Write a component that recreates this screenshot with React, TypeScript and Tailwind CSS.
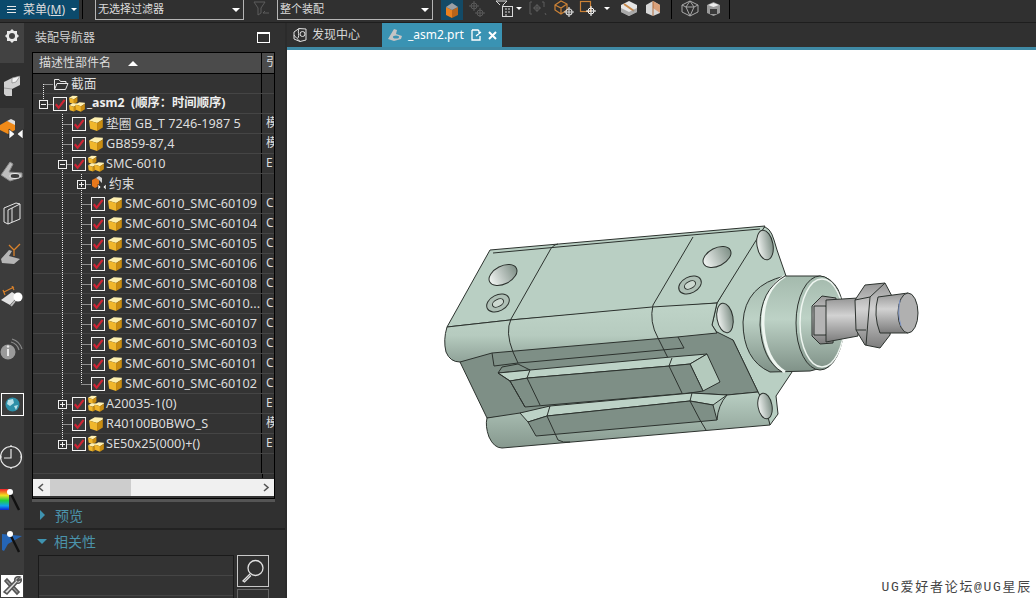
import React from "react";

type CellKind = "none" | "line" | "tee" | "last" | "first" | "minus" | "plus" | "minusLast" | "plusLast" | "plusTee" | "minusTee";

const Cell = ({ kind }: { kind: CellKind }) => {
  const box = kind.startsWith("minus") || kind.startsWith("plus");
  const up = kind !== "none" && kind !== "first";
  const down = kind === "line" || kind === "tee" || kind === "plusTee" || kind === "minusTee" || kind === "first" || kind === "plus" || kind === "minus";
  const right = kind !== "none" && kind !== "line";
  return (
    <svg width="19" height="20" className="shrink-0" fill="none">
      {up && <path d="M9.5 0V10" stroke="#e8e8e8" strokeDasharray="1 1" />}
      {down && <path d="M9.5 10V20" stroke="#e8e8e8" strokeDasharray="1 1" />}
      {right && <path d="M9.5 10.5H19" stroke="#e8e8e8" strokeDasharray="1 1" />}
      {box && (
        <>
          <rect x="5.5" y="6.5" width="8" height="8" fill="#333" stroke="#f0f0f0" />
          <path d="M7 10.5H12" stroke="#f0f0f0" />
          {kind.startsWith("plus") && <path d="M9.5 8V13" stroke="#f0f0f0" />}
        </>
      )}
    </svg>
  );
};

const Check = () => (
  <svg width="14" height="14" className="shrink-0" viewBox="0 0 14 14" fill="none">
    <rect x="0.5" y="0.5" width="13" height="13" fill="#3a3a3a" stroke="#f2f2f2" />
    <path d="M2.8 7.2L5.6 10.8L11.6 2.8" stroke="#cf2433" strokeWidth="2.2" />
  </svg>
);

const Cube = ({ x = 0, y = 0, s = 1 }: { x?: number; y?: number; s?: number }) => (
  <g transform={`translate(${x} ${y}) scale(${s})`}>
    <path d="M0 4L5 1L12 1.5V3L7 6Z" fill="#fff0b0" />
    <path d="M0 4L7 6V13L1 11Z" fill="#f0b62c" />
    <path d="M7 6L12 3V10L7 13Z" fill="#c98d12" />
  </g>
);

const PartIcon = () => (
  <svg width="16" height="16" className="shrink-0" viewBox="0 0 16 16">
    <Cube x={1} y={0} s={1.15} />
  </svg>
);

const AsmIcon = () => (
  <svg width="16" height="17" className="shrink-0" viewBox="0 0 16 17">
    <Cube x={0} y={0} s={0.7} />
    <Cube x={0} y={7.5} s={0.7} />
    <Cube x={6.5} y={6.5} s={0.78} />
  </svg>
);

const FolderIcon = () => (
  <svg width="16" height="14" className="shrink-0" viewBox="0 0 16 14" fill="none" stroke="#e8e8e8">
    <path d="M1.5 12.5V2.5H6L7.5 4.5H13V6.5" />
    <path d="M1.5 12.5L4 6.5H15L12.5 12.5Z" />
  </svg>
);

const ConstraintIcon = () => (
  <svg width="16" height="16" className="shrink-0" viewBox="0 0 16 16">
    <path d="M1 4L5 2L8 4V10L4 12L1 10Z" fill="#e8781c" />
    <path d="M5 2L8 0L11 2L11 7L8 4Z" fill="#cfcfcf" />
    <path d="M7 8L10 11L7 14Z M15 8L12 11L15 14Z" fill="#f4f4f4" stroke="#111" strokeWidth="0.5" />
  </svg>
);

type Row = { cells: CellKind[]; icon?: "part" | "asm" | "folder" | "con"; check?: boolean; name: string; ref?: string; bold?: boolean };

const sub = (name: string, last = false): Row => ({ cells: ["none", "line", last ? "last" : "tee"], check: true, icon: "part", name, ref: "C" });

const rows: Row[] = [
  { cells: ["first"], icon: "folder", name: "截面" },
  { cells: ["minusLast"], check: true, icon: "asm", name: "_asm2\u00a0 (顺序：时间顺序)", bold: true },
  { cells: ["none", "tee"], check: true, icon: "part", name: "垫圈 GB_T 7246-1987 5", ref: "模" },
  { cells: ["none", "tee"], check: true, icon: "part", name: "GB859-87,4", ref: "模" },
  { cells: ["none", "minusTee"], check: true, icon: "asm", name: "SMC-6010", ref: "E" },
  { cells: ["none", "line", "plus"], icon: "con", name: "约束" },
  sub("SMC-6010_SMC-60109"),
  sub("SMC-6010_SMC-60104"),
  sub("SMC-6010_SMC-60105"),
  sub("SMC-6010_SMC-60106"),
  sub("SMC-6010_SMC-60108"),
  sub("SMC-6010_SMC-6010..."),
  sub("SMC-6010_SMC-60107"),
  sub("SMC-6010_SMC-60103"),
  sub("SMC-6010_SMC-60101"),
  sub("SMC-6010_SMC-60102", true),
  { cells: ["none", "plusTee"], check: true, icon: "asm", name: "A20035-1(0)", ref: "E" },
  { cells: ["none", "tee"], check: true, icon: "part", name: "R40100B0BWO_S", ref: "模" },
  { cells: ["none", "plusLast"], check: true, icon: "asm", name: "SE50x25(000)+()", ref: "E" },
];

const TreeRow = ({ row }: { row: Row }) => (
  <div className="flex h-5 shrink-0 border-b border-[#454545] bg-[#333333]">
    <div className="flex w-[229px] shrink-0 items-center overflow-hidden border-r border-black pl-[1px]">
      {row.cells.map((c, i) => (
        <Cell key={i} kind={c} />
      ))}
      {row.check && (
        <div className="mr-[2px] shrink-0">
          <Check />
        </div>
      )}
      {row.icon === "part" && <PartIcon />}
      {row.icon === "asm" && <AsmIcon />}
      {row.icon === "folder" && <FolderIcon />}
      {row.icon === "con" && <ConstraintIcon />}
      <span className={`ml-[2px] whitespace-nowrap ${row.bold ? "text-[12.3px] font-bold text-[#eeeeee]" : "text-[12.7px] text-[#dddddd]"}`}>{row.name}</span>
    </div>
    <span className="ml-[4px] whitespace-nowrap text-[12px] text-[#dddddd]">{row.ref}</span>
  </div>
);

const railIcons: { h: number; node: React.ReactNode; cls?: string }[] = [
  {
    h: 40,
    cls: "bg-[#424242]",
    node: (
      <svg width="16" height="16" viewBox="0 0 16 16" className="-mt-[14px]">
        <path d="M8 1L10 3L13 3L13 6L15 8L13 10L13 13L10 13L8 15L6 13L3 13L3 10L1 8L3 6L3 3L6 3Z" fill="#e8e8e8" />
        <circle cx="8" cy="8" r="3" fill="#424242" />
      </svg>
    ),
  },
  {
    h: 45,
    cls: "bg-[#303030]",
    node: (
      <svg width="18" height="22" viewBox="0 0 18 22">
        <path d="M1 7L9 3L17 1V10L9 14V21L3 21L1 19Z" fill="#d0d0d0" />
        <path d="M9 3L17 1L13 7L9 8Z M1 13L9 14" fill="#f4f4f4" stroke="#777" strokeWidth="0.6" />
      </svg>
    ),
  },
  {
    h: 40,
    node: (
      <svg width="24" height="24" viewBox="0 0 24 24">
        <path d="M0 9L7 5L15 8V14L8 18L0 14Z" fill="#f08a18" />
        <path d="M7 5L11 3L15 5V9Z" fill="#e0e0e0" />
        <path d="M9 13L15 18L9 23Z M23 13L17 18L23 23Z" fill="#fafafa" stroke="#111" strokeWidth="0.6" />
      </svg>
    ),
  },
  {
    h: 46,
    node: (
      <svg width="24" height="24" viewBox="0 0 24 24" fill="none">
        <path d="M1 16L10 3L13 5L9 13L22 14L22 18L10 22Z" fill="#bdbdbd" stroke="#888" />
        <ellipse cx="15" cy="17" rx="5" ry="2.5" fill="#3d3d3d" stroke="#eee" />
      </svg>
    ),
  },
  {
    h: 38,
    node: (
      <svg width="20" height="24" viewBox="0 0 20 24" fill="none" stroke="#e6e6e6">
        <path d="M2 7L14 2L18 3V18L6 23L2 21Z M6 9V23 M10 7V21 M6 9L18 3" />
      </svg>
    ),
  },
  {
    h: 42,
    node: (
      <svg width="24" height="24" viewBox="0 0 24 24" fill="none">
        <path d="M1 18L9 9L12 10L9 15L20 18L14 23L2 22Z" fill="#b5b5b5" />
        <path d="M9 4L14 9L20 3M14 9V15" stroke="#d9822b" strokeWidth="1.3" />
      </svg>
    ),
  },
  {
    h: 46,
    node: (
      <svg width="24" height="22" viewBox="0 0 24 22">
        <path d="M1 14L12 6L18 10L10 19Z" fill="#e2e2e2" />
        <path d="M4 6L14 1M5 9L3 4M14 4L12 0" stroke="#d9822b" strokeWidth="1.2" />
        <circle cx="18" cy="11" r="4.5" fill="#fff" />
        <path d="M15 15L11 20" stroke="#bbb" strokeWidth="2" />
      </svg>
    ),
  },
  {
    h: 60,
    node: (
      <svg width="24" height="24" viewBox="0 0 24 24" fill="none">
        <circle cx="8" cy="14" r="7.5" fill="#9a9a9a" />
        <path d="M8 11V18" stroke="#e8e8e8" strokeWidth="2" />
        <circle cx="8" cy="8.5" r="1.2" fill="#e8e8e8" />
        <path d="M11 4A11 11 0 0 1 19 12M12 1A15 15 0 0 1 22 11" stroke="#8a8a8a" strokeWidth="1.2" />
      </svg>
    ),
  },
  {
    h: 48,
    node: (
      <div className="flex h-[23px] w-[23px] items-center justify-center self-center border border-white">
        <svg width="15" height="15" viewBox="0 0 15 15">
          <circle cx="7.5" cy="7.5" r="7" fill="#2d8fa8" />
          <path d="M3 3L8 2L9 6L5 9L2 7ZM9 9L13 8L11 13Z" fill="#b7dfe8" />
        </svg>
      </div>
    ),
  },
  {
    h: 58,
    node: (
      <svg width="24" height="24" viewBox="0 0 24 24" fill="none" stroke="#e8e8e8" strokeWidth="1.2">
        <circle cx="11" cy="12" r="10.5" />
        <path d="M11 4V13H4M11 0V2M11 22V24M0 12H2M20 12H22" />
      </svg>
    ),
  },
  {
    h: 28,
    node: (
      <svg width="24" height="24" viewBox="0 0 24 24">
        <defs>
          <linearGradient id="rainbow" x1="0" y1="0" x2="0" y2="1">
            <stop offset="0" stopColor="#f0202a" />
            <stop offset="0.3" stopColor="#f5e020" />
            <stop offset="0.55" stopColor="#20d040" />
            <stop offset="0.8" stopColor="#10a0f0" />
            <stop offset="1" stopColor="#1020d0" />
          </linearGradient>
        </defs>
        <rect x="0" y="1" width="9" height="21" fill="url(#rainbow)" />
        <path d="M10 4L19 22" stroke="#111" strokeWidth="2.4" />
        <circle cx="10" cy="4" r="3" fill="#fff" />
      </svg>
    ),
  },
  {
    h: 56,
    node: (
      <svg width="24" height="24" viewBox="0 0 24 24">
        <path d="M2 4L22 6L8 14L4 21L2 20Z" fill="#2565b5" />
        <path d="M10 4L19 22" stroke="#111" strokeWidth="2.4" />
        <circle cx="10" cy="4" r="3" fill="#fff" />
      </svg>
    ),
  },
  {
    h: 32,
    node: (
      <div className="flex h-[22px] w-[22px] shrink-0 items-center justify-center bg-white">
        <svg width="20" height="20" viewBox="0 0 20 20" fill="none" stroke="#555" strokeWidth="1.6">
          <path d="M5 3L17 16L15 18L3 5Z" fill="#999" />
          <path d="M2 16L13 5C12 2 15 0 18 1L15 4L16 5L19 3C20 6 17 8 15 7L5 18Z" fill="#ddd" />
        </svg>
      </div>
    ),
  },
];

const Toolbar = () => (
  <div className="flex h-[23px] shrink-0 items-start border-b border-[#1e1e1e] bg-[#303030] text-[11px] text-[#dddddd]">
    <div className="flex h-[19px] w-[79px] shrink-0 items-center bg-[#0b4a6c] pl-[7px] text-[12px]">
      <svg width="9" height="9" viewBox="0 0 9 9" stroke="#e8e8e8">
        <path d="M0 1.5H9M0 4.5H9M0 7.5H9" />
      </svg>
      <span className="ml-[7px] whitespace-nowrap">
        菜单(<span className="underline">M</span>)
      </span>
      <div className="ml-[6px] h-0 w-0 border-x-[3px] border-t-[3px] border-x-transparent border-t-white" />
    </div>
    <div className="ml-[3px] h-[19px] w-px shrink-0 bg-black" />
    <div className="ml-[12px] flex h-[20px] w-[149px] shrink-0 items-center justify-between border border-t-0 border-[#b5b5b5] pl-[2px] pr-[3px]">
      <span>无选择过滤器</span>
      <div className="h-0 w-0 border-x-[4px] border-t-[4px] border-x-transparent border-t-white" />
    </div>
    <svg width="18" height="16" viewBox="0 0 18 16" fill="none" stroke="#5c5c5c" className="ml-[9px] mt-[1px] shrink-0">
      <path d="M1 1H12L8 7V12L5 14V7Z M10 12H16M10 12L12 10" />
    </svg>
    <div className="ml-[6px] flex h-[20px] w-[156px] shrink-0 items-center justify-between border border-t-0 border-[#b5b5b5] pl-[2px] pr-[3px]">
      <span>整个装配</span>
      <div className="h-0 w-0 border-x-[4px] border-t-[4px] border-x-transparent border-t-white" />
    </div>
    <div className="ml-[8px] flex h-[20px] w-[22px] shrink-0 items-center justify-center bg-[#134a66]">
      <svg width="14" height="17" viewBox="0 0 14 17">
        <path d="M1 5L7 8V16L1 13Z" fill="#e8801e" />
        <path d="M7 8L13 5V13L7 16Z" fill="#b8641a" />
        <path d="M1 5L7 1L13 5L7 8Z" fill="#9aa0a6" />
      </svg>
    </div>
    <svg width="18" height="17" viewBox="0 0 18 17" fill="none" stroke="#5a5a5a" className="ml-[5px] mt-[1px] shrink-0">
      <circle cx="6" cy="5" r="3" />
      <circle cx="12" cy="12" r="3" />
      <path d="M6 0V10M1 5H11M12 7V16M7 12H17" />
    </svg>
    <svg width="18" height="18" viewBox="0 0 18 18" fill="none" stroke="#d8d8d8" className="ml-[9px] shrink-0">
      <path d="M1 1H12L8 5V13M5 5L1 1" />
      <rect x="7.5" y="6.5" width="10" height="10" fill="#303030" />
      <path d="M10 9H12M13 9H15M10 12H12M13 12H15M10 15H12" />
    </svg>
    <div className="ml-[3px] mt-[7px] h-0 w-0 shrink-0 border-x-[3px] border-t-[3px] border-x-transparent border-t-white" />
    <svg width="18" height="17" viewBox="0 0 18 17" fill="none" stroke="#5c5c5c" className="ml-[7px] mt-[1px] shrink-0">
      <path d="M3 1H1V13H3M13 1H15V6M4 7H12M8 3V11M16 12L17 14" />
      <circle cx="8" cy="7" r="2.5" />
    </svg>
    <svg width="22" height="18" viewBox="0 0 22 18" fill="none" stroke="#cc8236" strokeWidth="1.2" className="ml-[7px] shrink-0">
      <path d="M1 5L7 1L13 4V10L7 14L1 10Z M1 5L7 8L13 4 M7 8V14" />
      <circle cx="15" cy="12" r="3" stroke="#d8d8d8" />
      <path d="M15 7V17M10 12H20" stroke="#d8d8d8" />
    </svg>
    <svg width="22" height="18" viewBox="0 0 22 18" fill="none" className="ml-[3px] shrink-0">
      <rect x="1.5" y="1.5" width="10" height="10" stroke="#cc8236" strokeWidth="1.2" />
      <circle cx="12" cy="11" r="3" stroke="#fff" />
      <path d="M12 6V16M7 11H17" stroke="#fff" />
    </svg>
    <div className="ml-[3px] mt-[7px] h-0 w-0 shrink-0 border-x-[3px] border-t-[3px] border-x-transparent border-t-white" />
    <svg width="18" height="17" viewBox="0 0 18 17" className="ml-[10px] shrink-0">
      <path d="M1 5L9 1L17 5V12L9 16L1 12Z" fill="#e6e6e6" />
      <path d="M4 4L14 11" stroke="#c98a4a" strokeWidth="2" />
      <path d="M1 12L9 16L17 12V8L9 12L1 8Z" fill="#8f8f8f" opacity="0.7" />
    </svg>
    <svg width="16" height="17" viewBox="0 0 16 17" className="ml-[7px] shrink-0">
      <path d="M1 5L8 1L15 5V13L8 16L1 13Z" fill="#d8d8d8" />
      <path d="M8 1L15 5V13L8 8Z" fill="#d9a07a" />
      <path d="M8 1V16" stroke="#b06a3a" />
    </svg>
    <div className="ml-[10px] h-[19px] w-px shrink-0 bg-black" />
    <svg width="18" height="17" viewBox="0 0 18 17" fill="none" stroke="#a8a8a8" className="ml-[9px] shrink-0">
      <path d="M1 5L9 1L17 5V12L9 16L1 12Z M1 5L5 7H13L17 5 M5 7L9 16L13 7 M5 7L9 1L13 7" />
    </svg>
    <svg width="15" height="16" viewBox="0 0 15 16" className="ml-[7px] mt-[1px] shrink-0">
      <path d="M1 4L7.5 1L14 4V12L7.5 15L1 12Z" fill="#9a9a9a" />
      <path d="M2 4L7.5 2L13 4L7.5 6Z" fill="#eeeeee" />
      <rect x="4" y="8" width="7" height="5" fill="#3a3a3a" />
    </svg>
    <div className="ml-[8px] h-[19px] w-px shrink-0 bg-black" />
  </div>
);

const Rail = () => (
  <div className="flex min-h-0 w-6 shrink-0 flex-col overflow-hidden bg-[#3c3c3c]">
    {railIcons.map((item, i) => (
      <div key={i} style={{ height: item.h }} className={`flex shrink-0 items-center justify-center ${item.cls ?? ""}`}>
        {item.node}
      </div>
    ))}
  </div>
);

const Navigator = () => (
  <div className="flex w-[261px] shrink-0 flex-col bg-[#303030] text-[12px] text-[#dddddd]">
    <div className="flex h-[29px] shrink-0 items-center justify-between pl-[11px] pr-[15px]">
      <span className="text-[#d0d0d0]">装配导航器</span>
      <div className="h-[11px] w-[13px] border border-t-2 border-white" />
    </div>
    <div className="ml-[8px] mr-[10px] flex h-[447px] shrink-0 flex-col overflow-hidden border border-black bg-[#333333]">
      <div className="flex h-[21px] shrink-0 border-b border-black bg-[#4b4b4b]">
        <div className="flex w-[229px] shrink-0 items-center border-r border-black pl-[6px]">
          <span>描述性部件名</span>
          <div className="ml-[17px] h-0 w-0 border-x-[5px] border-b-[5px] border-x-transparent border-b-white" />
        </div>
        <span className="ml-[4px] whitespace-nowrap">引</span>
      </div>
      {rows.map((row, i) => (
        <TreeRow key={i} row={row} />
      ))}
      <TreeRow row={{ cells: [], name: "" }} />
      <div className="flex-1 border-b border-transparent">
        <div className="ml-[229px] h-full w-px bg-black" />
      </div>
      <div className="flex h-[17px] shrink-0 items-center bg-[#f0f0f0]">
        <svg width="17" height="17" viewBox="0 0 17 17" fill="none" stroke="#555" strokeWidth="1.6" className="shrink-0">
          <path d="M10 5L6 8.5L10 12" />
        </svg>
        <div className="h-[17px] w-[81px] shrink-0 bg-[#cdcdcd]" />
        <div className="flex-1" />
        <svg width="17" height="17" viewBox="0 0 17 17" fill="none" stroke="#555" strokeWidth="1.6" className="shrink-0">
          <path d="M7 5L11 8.5L7 12" />
        </svg>
      </div>
      <div className="h-[2px] shrink-0 bg-[#333333]" />
    </div>
    <div className="ml-[8px] mr-[10px] h-[3px] shrink-0 bg-[#555555]" />
    <div className="flex h-[28px] shrink-0 items-center border-b-2 border-[#222222] pl-[16px] text-[14px] text-[#4b93ab]">
      <div className="h-0 w-0 border-y-[5px] border-l-[5px] border-y-transparent border-l-[#3f93b0]" />
      <span className="ml-[10px]">预览</span>
    </div>
    <div className="flex min-h-0 flex-1 flex-col pl-[14px] pr-[16px]">
      <div className="mb-[3px] flex h-[22px] shrink-0 items-center text-[14px] text-[#4b93ab]">
        <div className="ml-[-1px] h-0 w-0 border-x-[5px] border-t-[5px] border-x-transparent border-t-[#3f93b0]" />
        <span className="ml-[7px]">相关性</span>
      </div>
      <div className="flex gap-[3px]">
        <div className="h-[60px] w-[196px] shrink-0 border border-[#1a1a1a] bg-[#333333]">
          <div className="h-5 border-b border-[#454545]" />
          <div className="h-5 border-b border-[#454545]" />
        </div>
        <div className="flex flex-col gap-[2px]">
          <div className="flex h-[32px] w-[32px] items-center justify-center border border-[#c8c8c8]">
            <svg width="26" height="26" viewBox="0 0 26 26" fill="none" stroke="#e0e0e0" strokeWidth="1.3">
              <circle cx="15.5" cy="10" r="7.5" />
              <path d="M10 16L3 23L4.5 24L11 17.5" />
            </svg>
          </div>
          <div className="h-[32px] w-[32px] border border-[#666666]" />
        </div>
      </div>
    </div>
  </div>
);

const Tabs = () => (
  <div className="flex h-[27px] shrink-0 items-stretch border-b-[3px] border-[#3f8aa5] bg-[#303030] text-[12px]">
    <div className="flex w-[95px] items-center pl-[5px] text-[#d8d8d8]">
      <svg width="16" height="16" viewBox="0 0 16 16" fill="none" stroke="#e0e0e0">
        <path d="M2 5L7 1.5L14 2V13L8 14.5L2 12Z M7 1.5C5 5 8 8 6 11 M2 8C4 11 6 12 8 14.5" />
        <circle cx="10.5" cy="7" r="2.5" />
      </svg>
      <span className="ml-[4px]">发现中心</span>
    </div>
    <div className="flex w-[120px] items-center bg-[#3a93b3] pl-[5px] text-white">
      <svg width="16" height="14" viewBox="0 0 16 14">
        <path d="M1 11L7 1L10 2L9 6L15 8L14 11L7 13Z" fill="#c4c4c4" />
        <ellipse cx="9" cy="9" rx="3" ry="1.5" fill="#3a93b3" />
      </svg>
      <span className="ml-[5px]">_asm2.prt</span>
      <svg width="11" height="12" viewBox="0 0 11 12" fill="none" stroke="#fff" strokeWidth="1.3" className="ml-[7px]">
        <path d="M1 1H7L8 2V5M1 1V11H9V7M5 7L10 3" />
      </svg>
      <svg width="9" height="9" viewBox="0 0 9 9" stroke="#fff" strokeWidth="2" className="ml-[6px]">
        <path d="M1 1L8 8M8 1L1 8" />
      </svg>
    </div>
  </div>
);

const Cylinder = () => (
  <svg viewBox="287 50 749 548" className="h-full w-full">
    <defs>
      <linearGradient id="band" x1="0" y1="0" x2="0" y2="1">
        <stop offset="0" stopColor="#bfd4c8" />
        <stop offset="0.55" stopColor="#b6cbbf" />
        <stop offset="1" stopColor="#8fa298" />
      </linearGradient>
      <linearGradient id="lower" x1="0" y1="0" x2="0" y2="1">
        <stop offset="0" stopColor="#b9cfc3" />
        <stop offset="1" stopColor="#86988e" />
      </linearGradient>
      <linearGradient id="boss" x1="0" y1="0" x2="0" y2="1">
        <stop offset="0" stopColor="#a4baad" />
        <stop offset="0.45" stopColor="#bdd2c6" />
        <stop offset="1" stopColor="#7f9187" />
      </linearGradient>
      <linearGradient id="hole" x1="0" y1="0" x2="1" y2="0">
        <stop offset="0" stopColor="#f2f5f3" />
        <stop offset="1" stopColor="#7e8f86" />
      </linearGradient>
      <linearGradient id="steel" x1="0" y1="0" x2="0" y2="1">
        <stop offset="0" stopColor="#969696" />
        <stop offset="0.4" stopColor="#d2d2d2" />
        <stop offset="1" stopColor="#7c7c7c" />
      </linearGradient>
    </defs>
    <g stroke="#2c322e" strokeWidth="1" strokeLinejoin="round">
      {/* end plate */}
      <path d="M717 303L762 227Q770 226 774 240L777 250L786 276L792 372L776 396L778 414L770 425L758 392L733 340L722 340L712 325Z" fill="#b9cfc3" />
      {/* recessed middle */}
      <path d="M460 362L487 418L758 392L733 340L717 332L490 345Z" fill="#7e8f86" />
      {/* top face */}
      <path d="M447 327L490 250L765 226L717 303L510 320Z" fill="#b9cfc3" />
      <path d="M493 253L558 247L680 236L760 229" fill="none" />
      {/* upper band */}
      <path d="M447 327L510 320L652 307L717 303L712 325L717 333L677 337L492 353L460 362Q450 362 446 352Q443 340 447 327Z" fill="url(#band)" />
      <path d="M558 244Q552 245 549 252L511 319Q505 332 513 352L518 363" fill="none" />
      <path d="M693 237L653 305Q649 322 658 338L668 358" fill="none" />
      {/* upper slot */}
      <path d="M492 353L494 366L518 363L530 362L684 348L678 337" fill="none" />
      <path d="M502 367L518 364L530 370L498 373Z" fill="#7e8f86" />
      <path d="M498 373L530 370L671 357L707 354L690 364L670 366L528 378L510 381Z" fill="#bcd2c6" />
      <path d="M690 364L707 354L720 382L703 391Z" fill="#b4cabd" />
      <path d="M510 381L525 407L690 393L703 391L690 364L670 366L528 378Z" fill="#7e8f86" />
      <path d="M498 373L510 381L525 407" fill="none" />
      <path d="M530 370L527 378L540 405" fill="none" />
      <path d="M672 358L669 366L682 393" fill="none" />
      {/* lower band */}
      <path d="M487 418L520 413L692 393L727 395L758 392L765 405L770 425L502 448Q494 448 489 437Q485 426 487 418Z" fill="url(#lower)" />
      <path d="M520 413L550 406L692 393L727 395L713 405L690 401L547 416L528 422Z" fill="#bcd2c6" />
      <path d="M528 422L536 436L717 420L713 405L690 401L547 416Z" fill="#7e8f86" />
      <path d="M550 406L547 416L558 440Q563 443 570 442" fill="none" />
      <path d="M692 393L690 401L700 420L706 430" fill="none" />
      <path d="M727 395Q718 405 717 420" fill="none" />
      {/* holes */}
      <ellipse cx="503" cy="275" rx="15" ry="9" transform="rotate(-27 503 275)" fill="url(#hole)" />
      <ellipse cx="498" cy="303" rx="12" ry="8" transform="rotate(-27 498 303)" fill="#aebfb5" />
      <ellipse cx="498" cy="303" rx="6" ry="3.5" transform="rotate(-27 498 303)" fill="#ccd8d0" />
      <ellipse cx="717" cy="257" rx="15" ry="9" transform="rotate(-27 717 257)" fill="url(#hole)" />
      <ellipse cx="690" cy="285" rx="12" ry="8" transform="rotate(-27 690 285)" fill="#aebfb5" />
      <ellipse cx="690" cy="285" rx="6" ry="3.5" transform="rotate(-27 690 285)" fill="#ccd8d0" />
      <ellipse cx="765" cy="245" rx="8" ry="15" transform="rotate(-10 765 245)" fill="url(#hole)" />
      <ellipse cx="725" cy="318" rx="8" ry="15" transform="rotate(-10 725 318)" fill="url(#hole)" />
      <ellipse cx="765" cy="406" rx="7" ry="13" transform="rotate(-10 765 406)" fill="url(#hole)" />
      {/* boss */}
      <path d="M785 276L820 276Q844 280 844 322Q844 365 810 371L770 372Q743 360 743 322Q745 285 785 276Z" fill="url(#boss)" />
      <path d="M785 276Q762 290 763 325Q765 360 785 372" fill="none" stroke="#eef5f0" strokeWidth="3" />
      <path d="M785 276Q760 290 760 325Q762 360 782 372" fill="none" />
      <ellipse cx="820" cy="323" rx="24" ry="47" fill="url(#boss)" />
      <ellipse cx="822" cy="323" rx="22" ry="44" fill="none" stroke="#eef5f0" strokeWidth="1.5" />
      {/* rod */}
      <path d="M812 306L822 296L836 298L833 343L820 344L812 336Z" fill="url(#steel)" />
      <path d="M814 306H826L833 320L826 335L814 335Z" fill="#b4b4b4" />
      <path d="M826 300L858 298V336L826 342Z" fill="url(#steel)" />
      <path d="M855 300L865 285L885 283L894 300L890 335L880 348L865 345L856 330Z" fill="url(#steel)" />
      <path d="M855 300L870 297L885 283M870 297L866 345M856 330L866 330" fill="none" />
      <path d="M878 297L908 293V333L880 333Q873 315 878 297Z" fill="url(#steel)" />
      <ellipse cx="908" cy="313" rx="10" ry="20" fill="#b0b0b0" />
      <path d="M900 300Q897 313 901 326" fill="none" stroke="#7f96c8" />
    </g>
  </svg>
);

const App = () => (
  <div className="flex h-[598px] w-[1036px] flex-col overflow-hidden bg-[#2b2b2b] font-['Noto_Sans','Noto_Sans_CJK_SC',sans-serif]">
    <Toolbar />
    <div className="flex min-h-0 flex-1">
      <Rail />
      <Navigator />
      <div className="ml-[2px] flex min-w-0 flex-1 flex-col">
        <Tabs />
        <div className="relative min-h-0 flex-1 bg-white">
          <Cylinder />
          <span className="absolute bottom-[2px] right-[4px] whitespace-nowrap font-['Liberation_Mono','Noto_Sans_CJK_SC',monospace] text-[13px] leading-4 tracking-[1.7px] text-[#444444]">
            UG爱好者论坛@UG星辰
          </span>
        </div>
      </div>
    </div>
  </div>
);

export default App;
